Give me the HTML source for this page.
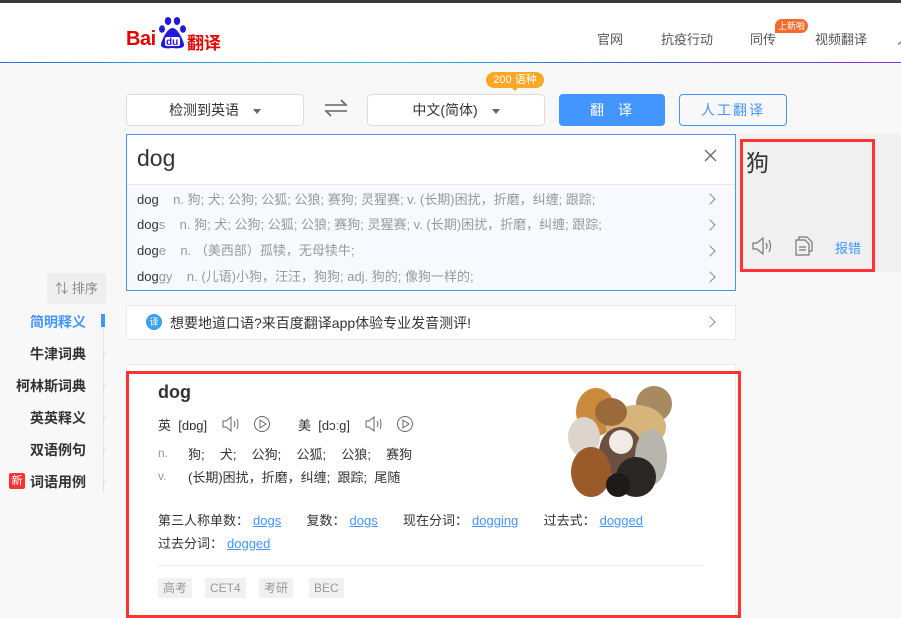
<!DOCTYPE html>
<html><head><meta charset="utf-8"><style>
*{margin:0;padding:0;box-sizing:border-box}
body{width:901px;height:618px;overflow:hidden;background:#f8f8f8;font-family:"Liberation Sans","Noto Sans CJK SC",sans-serif;position:relative;color:#333}
.a{position:absolute}
.nav{font-size:13px;color:#555;top:29px}
.sel{background:#fff;border:1px solid #ddd;border-radius:4px;height:32px;top:94px;font-size:14px;color:#333;text-align:center;line-height:30px}
.tri{display:inline-block;width:0;height:0;border-left:4px solid transparent;border-right:4px solid transparent;border-top:5px solid #666;vertical-align:middle;margin-left:14px}
.sug{left:137px;font-size:13px;color:#999;white-space:nowrap}
.sug b{font-weight:normal;color:#333}
.arr{left:706px;width:8px;height:8px;border-right:1.3px solid #888;border-top:1.3px solid #888;transform:rotate(45deg)}
.side{right:815px;font-size:14px;font-weight:bold;color:#333;text-align:right}
.tick{left:102px;width:4px;height:1px;background:#ddd}
.ex{font-size:13px;color:#333}
.ex u{color:#4395ff;margin-left:4px}
.tag{top:578px;height:20px;background:#f1f1f1;color:#999;font-size:12px;line-height:20px;padding:0 5px}
</style></head><body>
<div class="a" style="left:0;top:0;width:901px;height:3px;background:#3a3a3a"></div>
<div class="a" style="left:0;top:3px;width:901px;height:59px;background:#fff"></div>
<div class="a" style="left:0;top:62px;width:901px;height:1px;background:linear-gradient(90deg,#2a6ddf,#25c4e0 40%,#3b5bdb 70%,#8a2be2)"></div>
<!-- logo -->
<div class="a" style="left:126px;top:28px;font-size:20px;font-weight:bold;color:#e10602;letter-spacing:-0.5px">Bai</div>
<svg class="a" style="left:158px;top:16px" width="30" height="33" viewBox="0 0 30 33">
<ellipse cx="10" cy="5" rx="3.2" ry="4" fill="#2319dc"/><ellipse cx="19" cy="5" rx="3.2" ry="4" fill="#2319dc"/>
<ellipse cx="4" cy="13" rx="3" ry="3.8" fill="#2319dc"/><ellipse cx="25" cy="13" rx="3" ry="3.8" fill="#2319dc"/>
<path d="M14.5 12 C9 12 4 24 3 28 C2 32 8 33 14.5 32 C21 33 27 32 26 28 C25 24 20 12 14.5 12Z" fill="#2319dc"/>
<rect x="7" y="21" width="15" height="9" rx="2" fill="#fff"/>
<text x="8" y="29" font-size="10" font-family="Liberation Sans" fill="#2319dc" font-weight="bold">du</text></svg>
<div class="a" style="left:187px;top:29px;font-size:17px;font-weight:bold;color:#e10602">翻译</div>
<div class="a nav" style="left:597px">官网</div>
<div class="a nav" style="left:661px">抗疫行动</div>
<div class="a nav" style="left:750px">同传</div>
<div class="a" style="left:775px;top:19px;width:33px;height:14px;border-radius:7px 7px 7px 0;background:#f36b2c;color:#fff;font-size:9px;text-align:center;line-height:14px">上新啦</div>
<div class="a nav" style="left:815px">视频翻译</div>
<div class="a nav" style="left:897px">人</div>
<!-- selectors -->
<div class="a sel" style="left:126px;width:178px">检测到英语<span class="tri"></span></div>
<svg class="a" style="left:324px;top:98px" width="24" height="20" viewBox="0 0 24 20" fill="none" stroke="#666" stroke-width="1.6"><path d="M1 7H22L17 2"/><path d="M23 13H2L7 18"/></svg>
<div class="a sel" style="left:367px;width:178px">中文(简体)<span class="tri"></span></div>
<div class="a" style="left:486px;top:72px;width:58px;height:16px;border-radius:8px;background:#fca826;color:#fff;font-size:11px;text-align:center;line-height:16px">200 语种</div>
<div class="a" style="left:511px;top:87px;border-left:4px solid transparent;border-right:4px solid transparent;border-top:4px solid #fca826"></div>
<div class="a" style="left:559px;top:94px;width:106px;height:32px;background:#4395ff;border-radius:4px;color:#fff;font-size:14px;text-align:center;line-height:32px;letter-spacing:14px;padding-left:12px">翻译</div>
<div class="a" style="left:679px;top:94px;width:108px;height:32px;border:1px solid #4395ff;border-radius:4px;color:#4395ff;font-size:14px;text-align:center;line-height:30px;letter-spacing:2px">人工翻译</div>
<!-- input -->
<div class="a" style="left:126px;top:134px;width:610px;height:157px;border:1px solid #4395ff;background:#f7f9ff"></div>
<div class="a" style="left:127px;top:135px;width:608px;height:50px;background:#fff;border-bottom:1px solid #ece6df"></div>
<div class="a" style="left:137px;top:145px;font-size:23px;color:#333">dog</div>
<svg class="a" style="left:704px;top:149px" width="13" height="13" stroke="#666" stroke-width="1.3"><path d="M1 1L12 12M12 1L1 12"/></svg>
<div class="a sug" style="top:189px"><b>dog</b>&nbsp;&nbsp;&nbsp;&nbsp;n. 狗; 犬; 公狗; 公狐; 公狼; 赛狗; 灵猩赛; v. (长期)困扰，折磨，纠缠; 跟踪;</div>
<div class="a sug" style="top:214px"><b>dog</b>s&nbsp;&nbsp;&nbsp;&nbsp;n. 狗; 犬; 公狗; 公狐; 公狼; 赛狗; 灵猩赛; v. (长期)困扰，折磨，纠缠; 跟踪;</div>
<div class="a sug" style="top:240px"><b>dog</b>e&nbsp;&nbsp;&nbsp;&nbsp;n.&nbsp;（美西部）孤犊，无母犊牛;</div>
<div class="a sug" style="top:266px"><b>dog</b>gy&nbsp;&nbsp;&nbsp;&nbsp;n. (儿语)小狗，汪汪，狗狗; adj. 狗的; 像狗一样的;</div>
<div class="a arr" style="top:195px"></div><div class="a arr" style="top:221px"></div><div class="a arr" style="top:247px"></div><div class="a arr" style="top:273px"></div>
<!-- result -->
<div class="a" style="left:736px;top:134px;width:165px;height:138px;background:#f0f0f0"></div>
<div class="a" style="left:740px;top:139px;width:135px;height:133px;border:3px solid #f33"></div>
<div class="a" style="left:746px;top:144px;font-size:23px;color:#333">狗</div>
<svg class="a" style="left:752px;top:237px" width="22" height="18" fill="none" stroke="#777" stroke-width="1.2"><path d="M1 6H5L11 1V17L5 12H1Z"/><path d="M14 6Q16 9 14 12M17 3Q20 9 17 15"/></svg>
<svg class="a" style="left:795px;top:236px" width="18" height="20" fill="none" stroke="#777" stroke-width="1.2"><path d="M4 4V1H12L17 6V15H14"/><path d="M1 4H10L14 8V19H1Z"/><path d="M4 11H11M4 14H11"/></svg>
<div class="a" style="left:835px;top:238px;font-size:13px;color:#4395ff">报错</div>
<!-- banner -->
<div class="a" style="left:126px;top:305px;width:610px;height:35px;background:#fff;border:1px solid #ebebeb"></div>
<div class="a" style="left:146px;top:314px;width:16px;height:16px;border-radius:50%;background:#3aa0f0;color:#fff;font-size:9px;text-align:center;line-height:16px">译</div>
<div class="a" style="left:170px;top:313px;font-size:14px;color:#333">想要地道口语?来百度翻译app体验专业发音测评!</div>
<div class="a arr" style="top:318px"></div>
<!-- sidebar -->
<div class="a" style="left:47px;top:273px;width:59px;height:31px;background:#eee;border-radius:3px;color:#888;font-size:13px;line-height:31px;text-align:center">⇅ 排序</div>
<div class="a" style="left:103px;top:315px;width:1px;height:178px;background:#e5e5e5"></div>
<div class="a" style="left:101px;top:314px;width:4px;height:13px;background:#4395ff"></div>
<div class="a side" style="top:312px;color:#4395ff">简明释义</div>
<div class="a side" style="top:344px">牛津词典</div><div class="a tick" style="top:353px"></div>
<div class="a side" style="top:376px">柯林斯词典</div><div class="a tick" style="top:385px"></div>
<div class="a side" style="top:408px">英英释义</div><div class="a tick" style="top:417px"></div>
<div class="a side" style="top:440px">双语例句</div><div class="a tick" style="top:449px"></div>
<div class="a side" style="top:472px">词语用例</div><div class="a tick" style="top:481px"></div>
<div class="a" style="left:9px;top:473px;width:16px;height:16px;background:#f33;border-radius:2px;color:#fff;font-size:11px;text-align:center;line-height:16px">新</div>
<!-- card -->
<div class="a" style="left:126px;top:364px;width:610px;height:254px;background:#fff;border:1px solid #ebebeb"></div>
<div class="a" style="left:126px;top:371px;width:615px;height:247px;border:3px solid #f33"></div>
<div class="a" style="left:158px;top:382px;font-size:18px;font-weight:bold;color:#333">dog</div>
<div class="a" style="left:158px;top:415px;font-size:13px;color:#333;white-space:nowrap">英&nbsp;&nbsp;[dɒg]</div>
<div class="a" style="left:298px;top:415px;font-size:13px;color:#333;white-space:nowrap">美&nbsp;&nbsp;[dɔːg]</div>
<svg class="a" style="left:222px;top:415px" width="60" height="18" fill="none" stroke="#666" stroke-width="1"><path d="M1 6H4L9 2V16L4 12H1Z"/><path d="M12 6Q14 9 12 12M15 4Q17 9 15 14"/><circle cx="40" cy="9" r="7.5"/><path d="M38 5V13L44 9Z"/></svg>
<svg class="a" style="left:365px;top:415px" width="60" height="18" fill="none" stroke="#666" stroke-width="1"><path d="M1 6H4L9 2V16L4 12H1Z"/><path d="M12 6Q14 9 12 12M15 4Q17 9 15 14"/><circle cx="40" cy="9" r="7.5"/><path d="M38 5V13L44 9Z"/></svg>
<div class="a" style="left:158px;top:446px;font-size:12px;color:#999">n.</div>
<div class="a" style="left:188px;top:444px;font-size:13px;color:#333;word-spacing:4px">狗;&nbsp; 犬;&nbsp; 公狗;&nbsp; 公狐;&nbsp; 公狼;&nbsp; 赛狗</div>
<div class="a" style="left:158px;top:469px;font-size:12px;color:#999">v.</div>
<div class="a" style="left:188px;top:467px;font-size:13px;color:#333">(长期)困扰，折磨，纠缠;&nbsp; 跟踪;&nbsp; 尾随</div>
<svg class="a" style="left:566px;top:382px" width="116" height="116">
<ellipse cx="30" cy="30" rx="20" ry="24" fill="#c98a3e"/><ellipse cx="88" cy="22" rx="18" ry="18" fill="#a88a62"/>
<ellipse cx="70" cy="45" rx="30" ry="22" fill="#d7b47a"/><ellipse cx="45" cy="30" rx="16" ry="14" fill="#9a6a3a"/>
<ellipse cx="18" cy="55" rx="16" ry="20" fill="#ddd4cc"/><ellipse cx="55" cy="70" rx="22" ry="25" fill="#6a5040"/>
<ellipse cx="55" cy="60" rx="12" ry="12" fill="#f2eae4"/><ellipse cx="25" cy="90" rx="20" ry="25" fill="#9b5a2a"/>
<ellipse cx="85" cy="75" rx="16" ry="28" fill="#b8b4ae"/><ellipse cx="70" cy="95" rx="20" ry="20" fill="#2a2624"/>
<ellipse cx="52" cy="103" rx="12" ry="12" fill="#1e1a18"/></svg>
<div class="a ex" style="left:158px;top:510px">第三人称单数：<u>dogs</u>&nbsp;&nbsp;&nbsp;&nbsp;&nbsp;&nbsp; 复数：<u>dogs</u>&nbsp;&nbsp;&nbsp;&nbsp;&nbsp;&nbsp; 现在分词：<u>dogging</u>&nbsp;&nbsp;&nbsp;&nbsp;&nbsp;&nbsp; 过去式：<u>dogged</u></div>
<div class="a ex" style="left:158px;top:533px">过去分词：<u>dogged</u></div>
<div class="a" style="left:158px;top:565px;width:546px;height:1px;background:#e8e8e8"></div>
<div class="a tag" style="left:158px">高考</div>
<div class="a tag" style="left:205px">CET4</div>
<div class="a tag" style="left:259px">考研</div>
<div class="a tag" style="left:309px">BEC</div>
</body></html>
